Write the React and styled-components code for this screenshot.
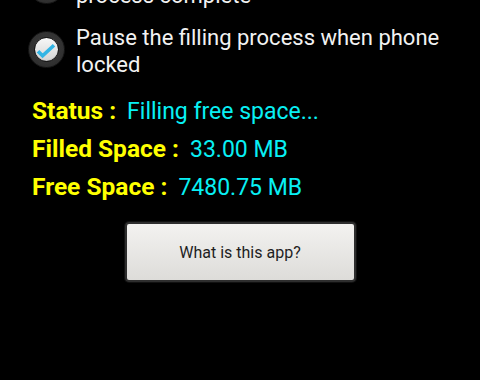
import React from "react";
import styled, { createGlobalStyle } from "styled-components";

const Global = createGlobalStyle`
  html, body { margin: 0; padding: 0; background: #000; }
  body { font-family: Roboto, "Noto Sans", "Liberation Sans", sans-serif; }
`;

const Screen = styled.div`
  width: 480px;
  height: 380px;
  overflow: hidden;
  background: #000;
  display: flex;
  flex-direction: column;
`;

const Options = styled.div`
  margin-top: -45px;
  padding-left: 28px;
  display: flex;
  flex-direction: column;
  gap: 15px;
`;

const OptionRow = styled.label`
  display: flex;
  align-items: center;
  gap: 11px;
`;

const Ring = styled.span`
  flex: none;
  width: 37px;
  height: 37px;
  box-sizing: border-box;
  border-radius: 50%;
  border: 1px solid #161616;
  background: radial-gradient(circle at 50% 45%, #3c3c3c 0%, #323232 60%, #262626 100%);
  display: flex;
  align-items: center;
  justify-content: center;
  margin-top: ${(p) => p.$nudge}px;
`;

const Knob = styled.span`
  width: 25px;
  height: 25px;
  box-sizing: border-box;
  border-radius: 50%;
  background: linear-gradient(#f7f7f7, #d4d4d4);
  border: 1px solid #121212;
  box-shadow: inset 0 -1px 1px rgba(0, 0, 0, 0.12);
  display: flex;
  align-items: center;
  justify-content: center;
`;

const OptionText = styled.span`
  color: #f2f2f2;
  font-size: 22px;
  line-height: 27px;
`;

const Stats = styled.div`
  margin-top: 14px;
  padding-left: 32px;
  display: flex;
  flex-direction: column;
`;

const StatRow = styled.div`
  display: flex;
  align-items: baseline;
  height: 38px;
  line-height: 38px;
`;

const StatLabel = styled.span`
  color: #ffff00;
  font-weight: bold;
  font-size: 24.5px;
  margin-right: 11px;
  white-space: pre;
`;

const StatValue = styled.span`
  color: #08f0f4;
  font-size: 23px;
`;

const Button = styled.button`
  align-self: center;
  margin-top: 16px;
  width: 231px;
  height: 60px;
  box-sizing: border-box;
  border: 2px solid #2e2e2e;
  border-radius: 4px;
  background: linear-gradient(#f3f2f0, #dddcd9);
  box-shadow: 0 0 0 1px #111;
  font-family: Roboto, "Noto Sans", "Liberation Sans", sans-serif;
  font-size: 16px;
  color: #1e1e1e;
  padding: 0;
`;

function Check({ nudge }) {
  return (
    <Ring $nudge={nudge}>
      <Knob>
        <svg width="23" height="23" viewBox="0 0 23 23">
          <path
            d="M3 13.2 L7.6 17.8 L19 7.2"
            fill="none"
            stroke="#33b5e5"
            strokeWidth="3.6"
          />
        </svg>
      </Knob>
    </Ring>
  );
}

const options = [
  { lines: ["Notify me when the filling", "process complete"], nudge: 6 },
  { lines: ["Pause the filling process when phone", "locked"], nudge: -4 },
];

const stats = [
  ["Status :", "Filling free space..."],
  ["Filled Space :", "33.00 MB"],
  ["Free Space :", "7480.75 MB"],
];

export default function App() {
  return (
    <>
      <Global />
      <Screen>
        <Options>
          {options.map(({ lines, nudge }, i) => (
            <OptionRow key={i}>
              <Check nudge={nudge} />
              <OptionText>
                {lines[0]}
                <br />
                {lines[1]}
              </OptionText>
            </OptionRow>
          ))}
        </Options>
        <Stats>
          {stats.map(([label, value]) => (
            <StatRow key={label}>
              <StatLabel>{label}</StatLabel>
              <StatValue>{value}</StatValue>
            </StatRow>
          ))}
        </Stats>
        <Button>What is this app?</Button>
      </Screen>
    </>
  );
}
